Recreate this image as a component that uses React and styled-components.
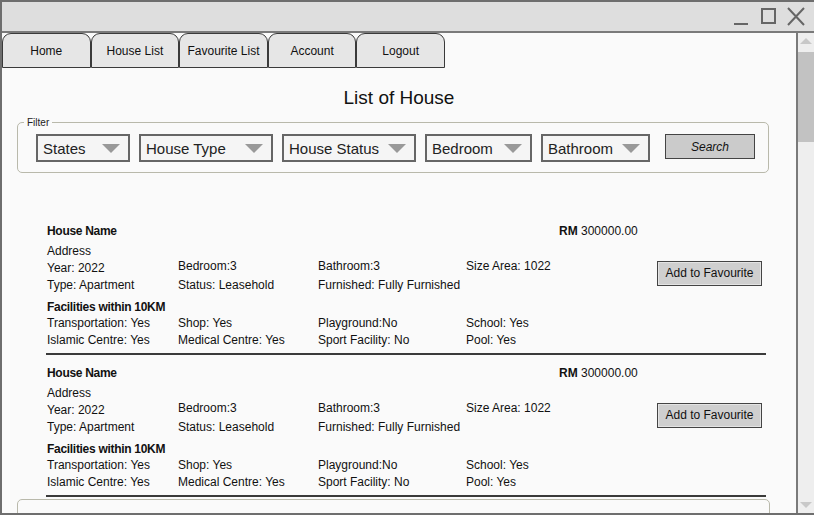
import React from 'react';
import styled, { createGlobalStyle } from 'styled-components';

const tabs = ['Home', 'House List', 'Favourite List', 'Account', 'Logout'];

const filters = [
  { label: 'States', width: 94 },
  { label: 'House Type', width: 134 },
  { label: 'House Status', width: 134 },
  { label: 'Bedroom', width: 107 },
  { label: 'Bathroom', width: 109 },
];

const houses = [1, 2];

const GlobalStyle = createGlobalStyle`
  body {
    margin: 0;
    background: #fafafa;
    font-family: "Liberation Sans", Arial, sans-serif;
    color: #111;
  }
`;

const App = () => {
  return (
    <>
      <GlobalStyle />
      <Window>
        <TitleBar>
          <WindowControls width="76" height="20" viewBox="0 0 76 20">
            <line x1="2" y1="17" x2="16" y2="17" stroke="#666" strokeWidth="2" />
            <rect x="30" y="2" width="13" height="14" fill="none" stroke="#666" strokeWidth="2" />
            <path d="M56 1 L72 18 M72 1 L56 18" stroke="#666" strokeWidth="2" fill="none" />
          </WindowControls>
        </TitleBar>
        <Body>
          <Content>
            <TabBar>
              {tabs.map((tab) => (
                <Tab key={tab}>{tab}</Tab>
              ))}
            </TabBar>
            <PageTitle>List of House</PageTitle>
            <FilterBox>
              <Legend>Filter</Legend>
              {filters.map((f) => (
                <Dropdown key={f.label} $width={f.width}>
                  <span>{f.label}</span>
                  <Arrow />
                </Dropdown>
              ))}
              <SearchButton>Search</SearchButton>
            </FilterBox>
            <HouseList>
              {houses.map((id) => (
                <HouseItem key={id}>
                  <Name>House Name</Name>
                  <Price>
                    <b>RM</b> 300000.00
                  </Price>
                  <Cell $row={2} $col={1}>Address</Cell>
                  <Cell $row={3} $col={1}>Year: 2022</Cell>
                  <Cell $row={3} $col={2} $lift>Bedroom:3</Cell>
                  <Cell $row={3} $col={3} $lift>Bathroom:3</Cell>
                  <Cell $row={3} $col={4} $span={2} $lift>Size Area: 1022</Cell>
                  <FavButton>Add to Favourite</FavButton>
                  <Cell $row={4} $col={1}>Type: Apartment</Cell>
                  <Cell $row={4} $col={2}>Status: Leasehold</Cell>
                  <Cell $row={4} $col={3} $span={2}>Furnished: Fully Furnished</Cell>
                  <SubHeading>Facilities within 10KM</SubHeading>
                  <Cell $row={6} $col={1}>Transportation: Yes</Cell>
                  <Cell $row={6} $col={2}>Shop: Yes</Cell>
                  <Cell $row={6} $col={3}>Playground:No</Cell>
                  <Cell $row={6} $col={4}>School: Yes</Cell>
                  <Cell $row={7} $col={1}>Islamic Centre: Yes</Cell>
                  <Cell $row={7} $col={2}>Medical Centre: Yes</Cell>
                  <Cell $row={7} $col={3}>Sport Facility: No</Cell>
                  <Cell $row={7} $col={4}>Pool: Yes</Cell>
                </HouseItem>
              ))}
            </HouseList>
            <NextPanel />
          </Content>
          <Scrollbar>
            <ScrollArrow viewBox="0 0 16 10">
              <path d="M2 8 L8 2 L14 8 Z" fill="#c8c8c8" />
            </ScrollArrow>
            <Thumb />
            <Track />
            <ScrollArrow viewBox="0 0 16 10">
              <path d="M2 2 L8 8 L14 2 Z" fill="#c8c8c8" />
            </ScrollArrow>
          </Scrollbar>
        </Body>
      </Window>
    </>
  );
};

const Window = styled.div`
  width: 814px;
  height: 515px;
  box-sizing: border-box;
  border-top: 2px solid #6e6e6e;
  border-left: 2px solid #6e6e6e;
  border-bottom: 2px solid #6e6e6e;
  display: flex;
  flex-direction: column;
  overflow: hidden;
  background: #fafafa;
`;

const TitleBar = styled.div`
  height: 29px;
  flex-shrink: 0;
  background: #dedede;
  border-bottom: 2px solid #7a7a7a;
  display: flex;
  justify-content: flex-end;
  align-items: center;
  padding-right: 6px;
`;

const WindowControls = styled.svg`
  display: block;
`;

const Body = styled.div`
  flex: 1;
  min-height: 0;
  display: flex;
`;

const Content = styled.div`
  flex: 1;
  min-width: 0;
  overflow: hidden;
  background: #fafafa;
`;

const TabBar = styled.div`
  display: flex;
`;

const Tab = styled.div`
  width: 88.6px;
  height: 35px;
  box-sizing: border-box;
  border: 1px solid #3a3a3a;
  border-radius: 9px 9px 0 0;
  background: #e6e6e6;
  display: flex;
  align-items: center;
  justify-content: center;
  font-size: 12px;
  color: #111;
  white-space: nowrap;
`;

const PageTitle = styled.h1`
  margin: 19px 0 13px;
  font-size: 19px;
  line-height: 22px;
  font-weight: normal;
  text-align: center;
  color: #111;
`;

const FilterBox = styled.div`
  position: relative;
  margin: 0 27px 0 15px;
  height: 51px;
  box-sizing: border-box;
  border: 1px solid #b9b9ab;
  border-radius: 5px;
  padding: 11px 0 0 18px;
  display: flex;
  align-items: flex-start;
  gap: 9px;
`;

const Legend = styled.span`
  position: absolute;
  top: -6px;
  left: 6px;
  padding: 0 3px;
  background: #fafafa;
  font-size: 10px;
  line-height: 12px;
  color: #222;
`;

const Dropdown = styled.div`
  width: ${(p) => p.$width}px;
  height: 28px;
  box-sizing: border-box;
  border: 2px solid #666;
  background: #f5f5f5;
  display: flex;
  align-items: center;
  justify-content: space-between;
  padding: 0 8px 0 5px;
  font-size: 15px;
  color: #222;
  white-space: nowrap;
`;

const Arrow = styled.span`
  width: 0;
  height: 0;
  border-left: 9px solid transparent;
  border-right: 9px solid transparent;
  border-top: 9px solid #999;
`;

const SearchButton = styled.div`
  width: 90px;
  height: 25px;
  margin-left: 6px;
  box-sizing: border-box;
  border: 1px solid #444;
  background: #cbcbcb;
  display: flex;
  align-items: center;
  justify-content: center;
  font-size: 12px;
  font-style: italic;
  color: #111;
`;

const HouseList = styled.div`
  margin: 47px 0 0 44px;
  width: 720px;
`;

const HouseItem = styled.div`
  display: grid;
  grid-template-columns: 131px 140px 148px 94px 98px 1fr;
  grid-template-rows: 23px 17px 17px 17px 21px 17px 17px;
  padding-bottom: 4px;
  margin-bottom: 7px;
  border-bottom: 2px solid #3a3a3a;
  font-size: 12px;
  line-height: 17px;
  color: #111;
`;

const Cell = styled.div`
  grid-row: ${(p) => p.$row};
  grid-column: ${(p) => p.$col} / span ${(p) => p.$span || 1};
  padding-left: 1px;
  white-space: nowrap;
  align-self: center;
  margin-top: ${(p) => (p.$lift ? '-4px' : '0')};
`;

const Name = styled.div`
  grid-row: 1;
  grid-column: 1 / span 4;
  padding-left: 1px;
  font-weight: bold;
  letter-spacing: -0.3px;
  align-self: center;
`;

const Price = styled.div`
  grid-row: 1;
  grid-column: 5 / span 2;
  align-self: center;
  white-space: nowrap;
`;

const SubHeading = styled.div`
  grid-row: 5;
  grid-column: 1 / span 3;
  padding-left: 1px;
  font-weight: bold;
  letter-spacing: -0.3px;
  align-self: end;
  line-height: 16px;
`;

const FavButton = styled.div`
  grid-row: 3 / span 2;
  grid-column: 6;
  align-self: start;
  margin-top: 1px;
  width: 105px;
  height: 25px;
  box-sizing: border-box;
  border: 1px solid #444;
  box-shadow: inset 0 0 0 1px #e4e4e4;
  background: #cfcfcf;
  display: flex;
  align-items: center;
  justify-content: center;
  font-size: 12px;
  white-space: nowrap;
`;

const NextPanel = styled.div`
  margin: -5px 26px 0 15px;
  height: 40px;
  border: 1px solid #b9b9ab;
  border-radius: 5px;
`;

const Scrollbar = styled.div`
  width: 16px;
  flex-shrink: 0;
  border-left: 2px solid #7a7a7a;
  background: #eeeeee;
  display: flex;
  flex-direction: column;
  align-items: stretch;
  padding: 2px 0;
`;

const ScrollArrow = styled.svg`
  width: 16px;
  height: 10px;
  display: block;
  margin: 1px 0;
`;

const Thumb = styled.div`
  height: 90px;
  margin-top: 5px;
  background: #c2c2c2;
`;

const Track = styled.div`
  flex: 1;
`;

export default App;
